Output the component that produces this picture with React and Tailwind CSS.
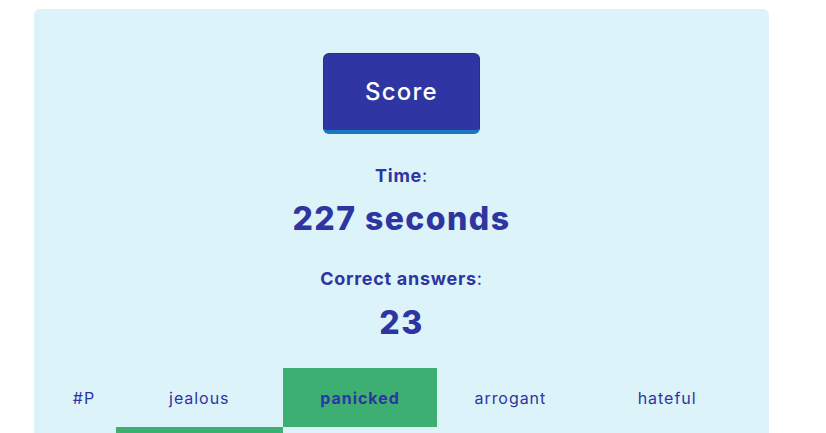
export default function App() {
  const tabs = [
    { t: "#P", w: "w-[64px]" },
    { t: "jealous", w: "w-[167px]" },
    { t: "panicked", w: "w-[155px]" },
    { t: "arrogant", w: "w-[146px]" },
    { t: "hateful", w: "w-[168px]" },
  ];
  return (
    <div className="w-[826px] h-[433px] overflow-hidden bg-white" style={{ fontFamily: "Inter, 'Open Sans', sans-serif" }}>
      <div className="ml-[34px] mt-[9px] w-[735px] h-[440px] rounded-[6px] bg-[#dcf3f9] flex flex-col items-center text-[#2e35a1]">
        <button className="mt-[44px] w-[157px] h-[81px] rounded-[6px] bg-[#2f36a3] border border-[#27308f] border-b-[4px] border-b-[#1b76c2] text-white text-[24px] font-medium tracking-[0.05em] flex items-center justify-center">
          Score
        </button>
        <div className="mt-[31px] text-[18px] leading-[22px] tracking-[0.04em]"><span className="font-bold">Time</span>:</div>
        <div className="mt-[12px] text-[32px] leading-[40px] font-extrabold tracking-[0.045em]">227 seconds</div>
        <div className="mt-[29px] text-[18px] leading-[22px] tracking-[0.04em]"><span className="font-bold">Correct answers</span>:</div>
        <div className="mt-[13px] text-[32px] leading-[40px] font-extrabold tracking-[0.045em]">23</div>
        <div className="self-stretch mt-[25px] px-[18px] flex">
          {tabs.map((x, i) => (
            <div key={i} className={`${x.w} flex flex-col`}>
              <div className={`h-[59px] flex items-center justify-center text-[16px] tracking-[0.06em] ${i === 2 ? "bg-[#3daf73] font-bold" : ""}`}>{x.t}</div>
              <div className={`h-[8px] ${i === 1 ? "bg-[#3daf73]" : ""}`} />
            </div>
          ))}
        </div>
      </div>
    </div>
  );
}
